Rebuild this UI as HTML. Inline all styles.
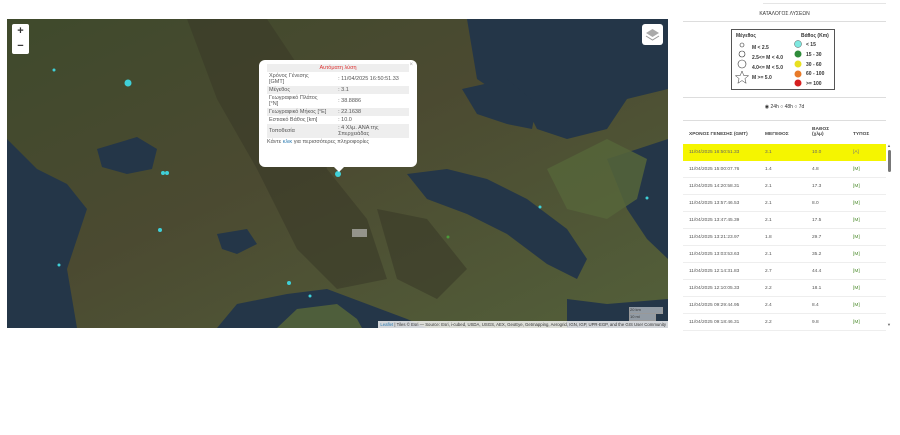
<!DOCTYPE html>
<html><head><meta charset="utf-8"><style>
*{margin:0;padding:0;box-sizing:border-box}
body{width:900px;height:435px;background:#fff;font-family:"Liberation Sans",sans-serif;position:relative;overflow:hidden}
.map{position:absolute;left:7px;top:19px;width:661px;height:309px;overflow:hidden;background:#434c2e}
.ctl{position:absolute;left:5px;top:5px;width:17px;height:30px;background:#fff;border-radius:2px;font-size:11px;text-align:center;line-height:15px;font-weight:bold;color:#333}
.layers{position:absolute;right:5px;top:5px;width:21px;height:21px;background:#fff;border-radius:3px}
.pop{position:absolute;left:252px;top:41px;width:158px;height:107px;background:#fff;border-radius:6px;font-size:5.5px;color:#555;padding:4px 8px}
.pop table{width:100%;border-collapse:collapse}
.pop td{padding:1px 2px;vertical-align:middle}
.pop tr:nth-child(odd) td{background:#eee}
.attr{position:absolute;right:0;bottom:0;background:rgba(255,255,255,.8);font-size:4.3px;color:#333;padding:1px 2px;white-space:nowrap}
.right{position:absolute;left:683px;top:0;width:210px;font-size:5px;color:#333}
.hr{position:absolute;left:0;width:203px;height:1px;background:#ddd}
.row{position:absolute;left:0;width:203px;height:17px;border-bottom:1px solid #eee;font-size:4.8px;color:#555;line-height:17px}
.row span{position:absolute}
.c1{left:6px}.c2{left:82px}.c3{left:129px}.c4{left:170px;color:#4a8a2a}
</style></head><body>
<div class="map">
<svg width="661" height="309" style="position:absolute;left:0;top:0">
<defs><linearGradient id="g" x1="0" y1="0" x2="1" y2="1"><stop offset="0" stop-color="#3f4a2c"/><stop offset=".45" stop-color="#4b4a31"/><stop offset="1" stop-color="#53603a"/></linearGradient></defs>
<rect width="661" height="309" fill="url(#g)"/>
<g fill="#3a3a28" opacity=".6">
<path d="M180 0 L260 0 L300 60 L320 150 L360 200 L380 260 L330 270 L290 230 L250 150 L210 80Z"/>
<path d="M370 190 L420 200 L460 250 L430 280 L390 260Z"/>
</g>
<g fill="#243648">
<path d="M0 120 L30 150 L60 165 L80 190 L70 220 L60 250 L70 309 L0 309Z"/>
<path d="M90 130 L130 118 L150 130 L145 150 L120 155 L95 148Z"/>
<path d="M210 309 L230 285 L280 275 L320 270 L360 285 L400 300 L420 309Z"/>
<path d="M460 0 L661 0 L661 70 L620 80 L600 110 L560 120 L530 110 L520 90 L500 80 L470 60 L465 30Z"/>
<path d="M455 70 L500 60 L530 85 L525 110 L500 105 L470 95Z"/>
<path d="M400 155 L440 150 L480 160 L520 180 L560 210 L580 240 L570 260 L540 245 L500 215 L460 195 L420 180Z"/>
<path d="M600 140 L661 120 L661 240 L640 220 L620 190Z"/>
<path d="M560 280 L600 285 L661 280 L661 309 L560 309Z"/>
<path d="M210 215 L240 210 L250 225 L230 235 L215 230Z"/>
</g>
<g fill="#56653a" opacity=".85">
<path d="M270 309 L290 290 L330 285 L350 300 L355 309Z"/>
<path d="M540 150 L600 120 L640 140 L630 180 L600 200 L560 190Z"/>
</g>
<rect x="345" y="210" width="15" height="8" fill="#ccc" opacity=".6"/>
<g fill="#3fd0d8">
<circle cx="121" cy="64" r="3.5"/><circle cx="47" cy="51" r="1.5"/><circle cx="156" cy="154" r="2"/><circle cx="160" cy="154" r="2"/>
<circle cx="153" cy="211" r="2"/><circle cx="52" cy="246" r="1.5"/><circle cx="282" cy="264" r="2"/><circle cx="303" cy="277" r="1.5"/>
<circle cx="331" cy="155" r="3"/><circle cx="533" cy="188" r="1.5"/><circle cx="640" cy="179" r="1.5"/><circle cx="441" cy="218" r="1.5" fill="#4a9a3a"/>
</g>
</svg>
<div class="ctl">+<br>−</div>
<div class="layers"><svg width="21" height="21"><path d="M4 9 L10.5 5 L17 9 L10.5 13Z" fill="#aaa"/><path d="M4 12 L10.5 16 L17 12" fill="none" stroke="#999"/></svg></div>
<div class="pop">
<div style="position:absolute;right:4px;top:2px;color:#aaa;font-size:6px">×</div>
<table>
<tr><td colspan="2" style="text-align:center;color:#d33;background:#eee">Αυτόματη λύση</td></tr>
<tr><td style="background:#fff">Χρόνος Γένεσης<br>[GMT]</td><td style="background:#fff">: 11/04/2025 16:50:51.33</td></tr>
<tr><td>Μέγεθος</td><td>: 3.1</td></tr>
<tr><td style="background:#fff">Γεωγραφικό Πλάτος<br>[°N]</td><td style="background:#fff">: 38.8886</td></tr>
<tr><td>Γεωγραφικό Μήκος [°E]</td><td>: 22.1638</td></tr>
<tr><td style="background:#fff">Εστιακό Βάθος [km]</td><td style="background:#fff">: 10.0</td></tr>
<tr><td>Τοποθεσία</td><td>: 4 Χλμ. ΑΝΑ της<br>Σπερχειάδας</td></tr>
</table>
<div style="margin-top:1px">Κάντε <span style="color:#2a7ab0">κλικ</span> για περισσότερες πληροφορίες</div>
<div style="position:absolute;left:75px;bottom:-5px;width:0;height:0;border-left:5px solid transparent;border-right:5px solid transparent;border-top:5px solid #fff"></div>
</div>
<div style="position:absolute;right:5px;bottom:14px;width:34px;height:7px;background:rgba(255,255,255,.5);border:1px solid #999;border-top:none;font-size:4px;color:#333">20 km</div>
<div style="position:absolute;right:12px;bottom:7px;width:27px;height:7px;background:rgba(255,255,255,.5);border:1px solid #999;border-top:none;font-size:4px;color:#333">10 mi</div>
<div class="attr"><span style="color:#2a7ab0">Leaflet</span> | Tiles © Esri — Source: Esri, i-cubed, USDA, USGS, AEX, GeoEye, Getmapping, Aerogrid, IGN, IGP, UPR-EGP, and the GIS User Community</div>
</div>

<div class="right">
<div class="hr" style="top:3px;left:80px;width:123px;background:#e5e5e5"></div>
<div style="position:absolute;top:11px;left:0;width:203px;text-align:center;font-size:5px">ΚΑΤΑΛΟΓΟΣ ΛΥΣΕΩΝ</div>
<div class="hr" style="top:21px"></div>
<div style="position:absolute;left:48px;top:29px;width:104px;height:61px;border:1px solid #555;font-size:5px;font-weight:bold;color:#333">
<div style="position:absolute;left:4px;top:3px">Μέγεθος</div>
<div style="position:absolute;left:69px;top:3px">Βάθος (Km)</div>
<svg width="104" height="61" style="position:absolute;left:0;top:0">
<circle cx="10" cy="15" r="2" fill="none" stroke="#333" stroke-width=".6"/>
<circle cx="10" cy="24" r="3" fill="none" stroke="#333" stroke-width=".6"/>
<circle cx="10" cy="34" r="4" fill="none" stroke="#333" stroke-width=".6"/>
<path d="M10 41 L11.8 45.6 L16.6 45.7 L12.9 48.6 L14.1 53.3 L10 50.6 L5.9 53.3 L7.1 48.6 L3.4 45.7 L8.2 45.6Z" fill="none" stroke="#333" stroke-width=".5"/>
<circle cx="66" cy="14" r="3.5" fill="#7fe8e0" stroke="#333" stroke-width=".4"/>
<circle cx="66" cy="24" r="3.5" fill="#2e8b3a"/>
<circle cx="66" cy="34" r="3.5" fill="#e8e020"/>
<circle cx="66" cy="44" r="3.5" fill="#e87a28"/>
<circle cx="66" cy="53" r="3.5" fill="#d62020"/>
</svg>
<div style="position:absolute;left:20px;top:13px;line-height:10px">M &lt; 2.5<br>2.5&lt;= M &lt; 4.0<br>4.0&lt;= M &lt; 5.0<br>M &gt;= 5.0</div>
<div style="position:absolute;left:74px;top:11px;line-height:9.8px">&lt; 15<br>15 - 30<br>30 - 60<br>60 - 100<br>&gt;= 100</div>
</div>
<div class="hr" style="top:97px"></div>
<div style="position:absolute;top:104px;left:0;width:203px;text-align:center;font-size:5px">◉ 24h ○ 48h ○ 7d</div>
<div class="hr" style="top:120px"></div>
<div style="position:absolute;top:126px;left:0;width:203px;height:18px;font-size:4.8px;font-weight:bold;color:#444">
<span style="position:absolute;left:6px;top:6px">ΧΡΟΝΟΣ ΓΕΝΕΣΗΣ (GMT)</span>
<span style="position:absolute;left:82px;top:6px">ΜΕΓΕΘΟΣ</span>
<span style="position:absolute;left:129px;top:1px">ΒΑΘΟΣ<br>(χλμ)</span>
<span style="position:absolute;left:170px;top:6px">ΤΥΠΟΣ</span>
</div>
<div class="row" style="top:144px;background:#f5f500;color:#666;border:none"><span class="c1">11/04/2025 16:50:51.33</span><span class="c2">3.1</span><span class="c3">10.0</span><span class="c4" style="color:#777">[A]</span></div>
<div class="row" style="top:161px"><span class="c1">11/04/2025 15:00:07.76</span><span class="c2">1.4</span><span class="c3">4.8</span><span class="c4">[M]</span></div>
<div class="row" style="top:178px"><span class="c1">11/04/2025 14:20:58.31</span><span class="c2">2.1</span><span class="c3">17.3</span><span class="c4">[M]</span></div>
<div class="row" style="top:195px"><span class="c1">11/04/2025 13:57:46.53</span><span class="c2">2.1</span><span class="c3">8.0</span><span class="c4">[M]</span></div>
<div class="row" style="top:212px"><span class="c1">11/04/2025 13:47:45.39</span><span class="c2">2.1</span><span class="c3">17.5</span><span class="c4">[M]</span></div>
<div class="row" style="top:229px"><span class="c1">11/04/2025 13:21:23.97</span><span class="c2">1.8</span><span class="c3">29.7</span><span class="c4">[M]</span></div>
<div class="row" style="top:246px"><span class="c1">11/04/2025 13:03:53.63</span><span class="c2">2.1</span><span class="c3">35.2</span><span class="c4">[M]</span></div>
<div class="row" style="top:263px"><span class="c1">11/04/2025 12:14:31.83</span><span class="c2">2.7</span><span class="c3">44.4</span><span class="c4">[M]</span></div>
<div class="row" style="top:280px"><span class="c1">11/04/2025 12:10:05.33</span><span class="c2">2.2</span><span class="c3">18.1</span><span class="c4">[M]</span></div>
<div class="row" style="top:297px"><span class="c1">11/04/2025 09:29:44.95</span><span class="c2">2.4</span><span class="c3">8.4</span><span class="c4">[M]</span></div>
<div class="row" style="top:314px"><span class="c1">11/04/2025 09:18:46.31</span><span class="c2">2.2</span><span class="c3">9.8</span><span class="c4">[M]</span></div>
<div style="position:absolute;left:205px;top:150px;width:3px;height:22px;background:#777;border-radius:2px"></div>
<div style="position:absolute;left:204px;top:143px;font-size:4px;color:#666">▲</div>
<div style="position:absolute;left:204px;top:322px;font-size:4px;color:#666">▼</div>
</div>
</body></html>
